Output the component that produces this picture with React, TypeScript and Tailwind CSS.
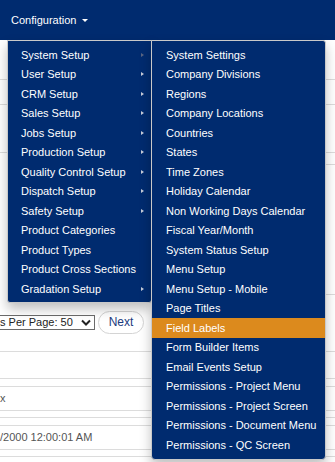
import React from 'react';

const font = { fontFamily: '"Liberation Sans", Arial, sans-serif' };

const setupItems: { label: string; sub: boolean }[] = [
  { label: 'System Setup', sub: true },
  { label: 'User Setup', sub: true },
  { label: 'CRM Setup', sub: true },
  { label: 'Sales Setup', sub: true },
  { label: 'Jobs Setup', sub: true },
  { label: 'Production Setup', sub: true },
  { label: 'Quality Control Setup', sub: true },
  { label: 'Dispatch Setup', sub: true },
  { label: 'Safety Setup', sub: true },
  { label: 'Product Categories', sub: false },
  { label: 'Product Types', sub: false },
  { label: 'Product Cross Sections', sub: false },
  { label: 'Gradation Setup', sub: true },
];

const systemItems = [
  'System Settings',
  'Company Divisions',
  'Regions',
  'Company Locations',
  'Countries',
  'States',
  'Time Zones',
  'Holiday Calendar',
  'Non Working Days Calendar',
  'Fiscal Year/Month',
  'System Status Setup',
  'Menu Setup',
  'Menu Setup - Mobile',
  'Page Titles',
  'Field Labels',
  'Form Builder Items',
  'Email Events Setup',
  'Permissions - Project Menu',
  'Permissions - Project Screen',
  'Permissions - Document Menu',
  'Permissions - QC Screen',
];

function Line({ indent = false }: { indent?: boolean }) {
  return <div className={`h-px bg-[#dcdcdc] ${indent ? 'ml-[150px]' : ''}`} />;
}

export default function App() {
  return (
    <div className="relative w-[335px] h-[462px] overflow-hidden bg-white text-[11px]" style={font}>
      {/* top bar */}
      <div className="h-[40px] bg-[#002b6f] flex items-center pl-[11px] text-white">
        <span>Configuration</span>
        <span className="ml-[6px] mt-px w-0 h-0 border-x-[3px] border-x-transparent border-t-[3px] border-t-white" />
      </div>

      {/* page content underneath */}
      <div className="flex flex-col">
        <div className="h-[39px]" />
        <Line />
        <div className="h-[24px]" />
        <Line />
        <div className="h-[47px]" />
        <Line />
        <div className="h-[11px]" />
        <Line indent />
        <div className="h-[129px]" />
        <Line indent />
        <div className="h-[15px]" />
        <div className="flex items-center h-[24px] gap-[3px]">
          <div className="h-[15px] w-[95px] border border-l-0 border-[#6b6b6b] flex items-center text-[#222]">
            <span className="whitespace-nowrap">s Per Page: 50</span>
            <svg width="10" height="7" viewBox="0 0 10 7" className="ml-[8px]">
              <path d="M1 1.5 L5 5.5 L9 1.5" stroke="#222" strokeWidth="2" fill="none" />
            </svg>
          </div>
          <div className="h-[23px] w-[46px] rounded-full border border-[#d4d4d4] flex items-center justify-center text-[12px] text-[#1b3b7e]">
            Next
          </div>
        </div>
        <div className="h-[17px]" />
        <Line />
        <div className="h-[26px]" />
        <Line />
        <div className="h-[7px]" />
        <Line />
        <div className="h-[23px] flex items-center text-[#555]">x</div>
        <Line />
        <div className="h-[6px]" />
        <Line />
        <div className="h-[7px]" />
        <Line />
        <div className="h-[23px] flex items-center text-[#555]">/2000 12:00:01 AM</div>
        <Line />
        <div className="h-[6px]" />
        <Line />
      </div>

      {/* first level dropdown */}
      <div className="absolute left-[7px] top-[40px] w-[145px] pt-[4px] pb-[3px] bg-[#002b6f] border border-[#c9c9c9] rounded-b-[3px] shadow-[0_6px_12px_rgba(0,0,0,0.25)] text-white">
        {setupItems.map((it, i) => (
          <div key={it.label} className="h-[19.5px] flex items-center pl-[13px] pr-[7px]">
            <span className="flex-1 whitespace-nowrap">{it.label}</span>
            {it.sub && (
              <span
                className={`w-0 h-0 border-y-[2.5px] border-y-transparent border-l-[3px] ${
                  i === 0 ? 'border-l-[#5a6682]' : 'border-l-[#c7ccd8]'
                }`}
              />
            )}
          </div>
        ))}
      </div>

      {/* second level dropdown */}
      <div className="absolute left-[151px] top-[40px] w-[175px] pt-[4px] pb-[4px] bg-[#002b6f] border border-[#c9c9c9] rounded-tr-[3px] rounded-b-[4px] shadow-[0_6px_12px_rgba(0,0,0,0.25)] text-white">
        {systemItems.map((label) => (
          <div
            key={label}
            className={`h-[19.5px] flex items-center pl-[14px] whitespace-nowrap ${
              label === 'Field Labels' ? 'bg-[#dc8a1d]' : ''
            }`}
          >
            {label}
          </div>
        ))}
      </div>
    </div>
  );
}
